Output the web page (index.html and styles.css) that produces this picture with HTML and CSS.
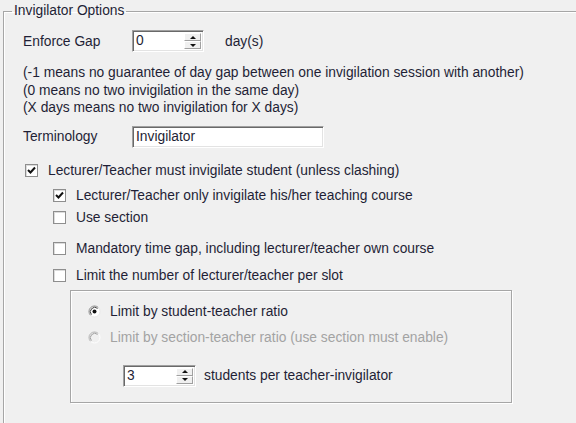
FILE: index.html
```html
<!DOCTYPE html>
<html lang="en">
  <head>
    <meta charset="UTF-8" />
    <title>Invigilator Options</title>
    <link rel="stylesheet" href="styles.css">
  </head>
  <body>
    <fieldset class="group">
      <legend>Invigilator Options</legend>

      <div class="field-row gap-row">
        <span class="field-label">Enforce Gap</span>
        <div class="spin">
          <span class="spin-value">0</span>
          <span class="spin-buttons">
            <span class="spin-btn"><span class="arrow-up"></span></span>
            <span class="spin-btn"><span class="arrow-down"></span></span>
          </span>
        </div>
        <span class="unit">day(s)</span>
      </div>

      <div class="notes">
        <p>(-1 means no guarantee of day gap between one invigilation session with another)</p>
        <p>(0 means no two invigilation in the same day)</p>
        <p>(X days means no two invigilation for X days)</p>
      </div>

      <div class="field-row term-row">
        <span class="field-label">Terminology</span>
        <div class="textbox">Invigilator</div>
      </div>

      <div class="check-row must-row">
        <span class="checkbox checked"></span>
        <span>Lecturer/Teacher must invigilate student (unless clashing)</span>
      </div>
      <div class="check-row nested only-row">
        <span class="checkbox checked"></span>
        <span>Lecturer/Teacher only invigilate his/her teaching course</span>
      </div>
      <div class="check-row nested section-row">
        <span class="checkbox"></span>
        <span>Use section</span>
      </div>
      <div class="check-row nested mandatory-row">
        <span class="checkbox"></span>
        <span>Mandatory time gap, including lecturer/teacher own course</span>
      </div>
      <div class="check-row nested limit-row">
        <span class="checkbox"></span>
        <span>Limit the number of lecturer/teacher per slot</span>
      </div>

      <div class="limit-box">
        <div class="radio-row">
          <svg class="radio" width="13" height="13" viewBox="0 0 13 13">
            <circle cx="6.5" cy="6.5" r="5.5" fill="#fff"/>
            <path d="M2.6 10.4 A5.5 5.5 0 0 1 10.4 2.6" fill="none" stroke="#8a8a8a" stroke-width="1"/>
            <path d="M3.4 9.6 A4.4 4.4 0 0 1 9.6 3.4" fill="none" stroke="#404040" stroke-width="1"/>
            <path d="M10.4 2.6 A5.5 5.5 0 0 1 2.6 10.4" fill="none" stroke="#e8e8e8" stroke-width="1"/>
            <circle cx="6.5" cy="6.5" r="2" fill="#111"/>
          </svg>
          <span>Limit by student-teacher ratio</span>
        </div>
        <div class="radio-row disabled">
          <svg class="radio" width="13" height="13" viewBox="0 0 13 13">
            <circle cx="6.5" cy="6.5" r="5.5" fill="#f0f0f0"/>
            <path d="M2.6 10.4 A5.5 5.5 0 0 1 10.4 2.6" fill="none" stroke="#b4b4b4" stroke-width="1"/>
            <path d="M3.4 9.6 A4.4 4.4 0 0 1 9.6 3.4" fill="none" stroke="#a0a0a0" stroke-width="1"/>
            <path d="M10.4 2.6 A5.5 5.5 0 0 1 2.6 10.4" fill="none" stroke="#fff" stroke-width="1"/>
          </svg>
          <span>Limit by section-teacher ratio (use section must enable)</span>
        </div>
        <div class="field-row ratio-row">
          <div class="spin small">
            <span class="spin-value">3</span>
            <span class="spin-buttons">
              <span class="spin-btn"><span class="arrow-up"></span></span>
              <span class="spin-btn"><span class="arrow-down"></span></span>
            </span>
          </div>
          <span class="ratio-text">students per teacher-invigilator</span>
        </div>
      </div>
    </fieldset>
  </body>
</html>
```

FILE: styles.css
```css
* {
  box-sizing: border-box;
}

body {
  margin: 0;
  padding: 0;
  background-color: #f0f0f0;
  font-family: "Liberation Sans", Arial, sans-serif;
  font-size: 13.8px;
  color: #1f1f36;
  overflow: hidden;
  height: 423px;
}

p {
  margin: 0;
}

.group {
  margin: 3px 0 0 3px;
  padding: 0 0 0 19px;
  width: 640px;
  min-height: 520px;
  border: 1px solid #a6a6a6;
  box-shadow: inset 1px 1px 0 #fff;
}

.group legend {
  margin-left: -11px;
  padding: 0 2px;
  line-height: 16px;
}

.field-row {
  display: flex;
  align-items: center;
  height: 22px;
}

.field-label {
  width: 109px;
}

.gap-row {
  margin-top: 11px;
}

.unit {
  margin-left: 21px;
}

/* sunken edit boxes */
.spin,
.textbox {
  height: 22px;
  background-color: #fff;
  border: 1px solid;
  border-color: #a0a0a0 #fff #fff #a0a0a0;
  box-shadow: inset 1px 1px 0 #696969, inset -1px -1px 0 #e3e3e3;
}

.spin {
  width: 72px;
  display: flex;
  padding: 2px 2px 2px 3px;
}

.spin.small {
  width: 73px;
}

.spin-value {
  flex: 1;
  line-height: 16px;
}

.spin-buttons {
  width: 17px;
  display: flex;
  flex-direction: column;
}

.spin-btn {
  flex: 1;
  display: flex;
  align-items: center;
  justify-content: center;
  background-color: #f0f0f0;
  border: 1px solid;
  border-color: #fff #a0a0a0 #a0a0a0 #fff;
}

.arrow-up,
.arrow-down {
  width: 0;
  height: 0;
  border-left: 3px solid transparent;
  border-right: 3px solid transparent;
}

.arrow-up {
  border-bottom: 3px solid #111;
}

.arrow-down {
  border-top: 3px solid #111;
}

.notes {
  margin-top: 12px;
  line-height: 17.5px;
}

.term-row {
  margin-top: 9px;
}

.textbox {
  width: 192px;
  padding: 2px 3px;
  line-height: 16px;
}

/* checkboxes */
.check-row {
  display: flex;
  align-items: center;
  gap: 10px;
  height: 16px;
  padding-left: 2px;
}

.check-row.nested {
  padding-left: 30px;
}

.checkbox {
  width: 13px;
  height: 13px;
  flex: none;
  background-color: #fff;
  border: 1px solid #8e8e8e;
  box-shadow: inset 1px 1px 0 #dcdcdc;
}

.checkbox.checked {
  background: #fff url("data:image/svg+xml,%3Csvg xmlns='http://www.w3.org/2000/svg' width='11' height='11'%3E%3Cpath d='M2 5 L4.5 7.5 L9 2.5' fill='none' stroke='%23111' stroke-width='2'/%3E%3C/svg%3E") no-repeat center;
}

.must-row {
  margin-top: 15px;
}

.only-row {
  margin-top: 9px;
}

.section-row {
  margin-top: 6px;
}

.mandatory-row {
  margin-top: 15px;
}

.limit-row {
  margin-top: 11px;
}

/* inner ratio box */
.limit-box {
  margin: 6px 0 0 47px;
  width: 442px;
  padding: 13px 0 15px 17px;
  border: 1px solid #a6a6a6;
  box-shadow: inset 1px 1px 0 #fff, 1px 1px 0 #fff;
}

.radio-row {
  display: flex;
  align-items: center;
  gap: 9px;
  height: 16px;
}

.radio-row + .radio-row {
  margin-top: 10px;
}

.radio-row.disabled {
  color: #a3a3a3;
}

.ratio-row {
  margin: 19px 0 0 35px;
}

.ratio-text {
  margin-left: 8px;
}
```
